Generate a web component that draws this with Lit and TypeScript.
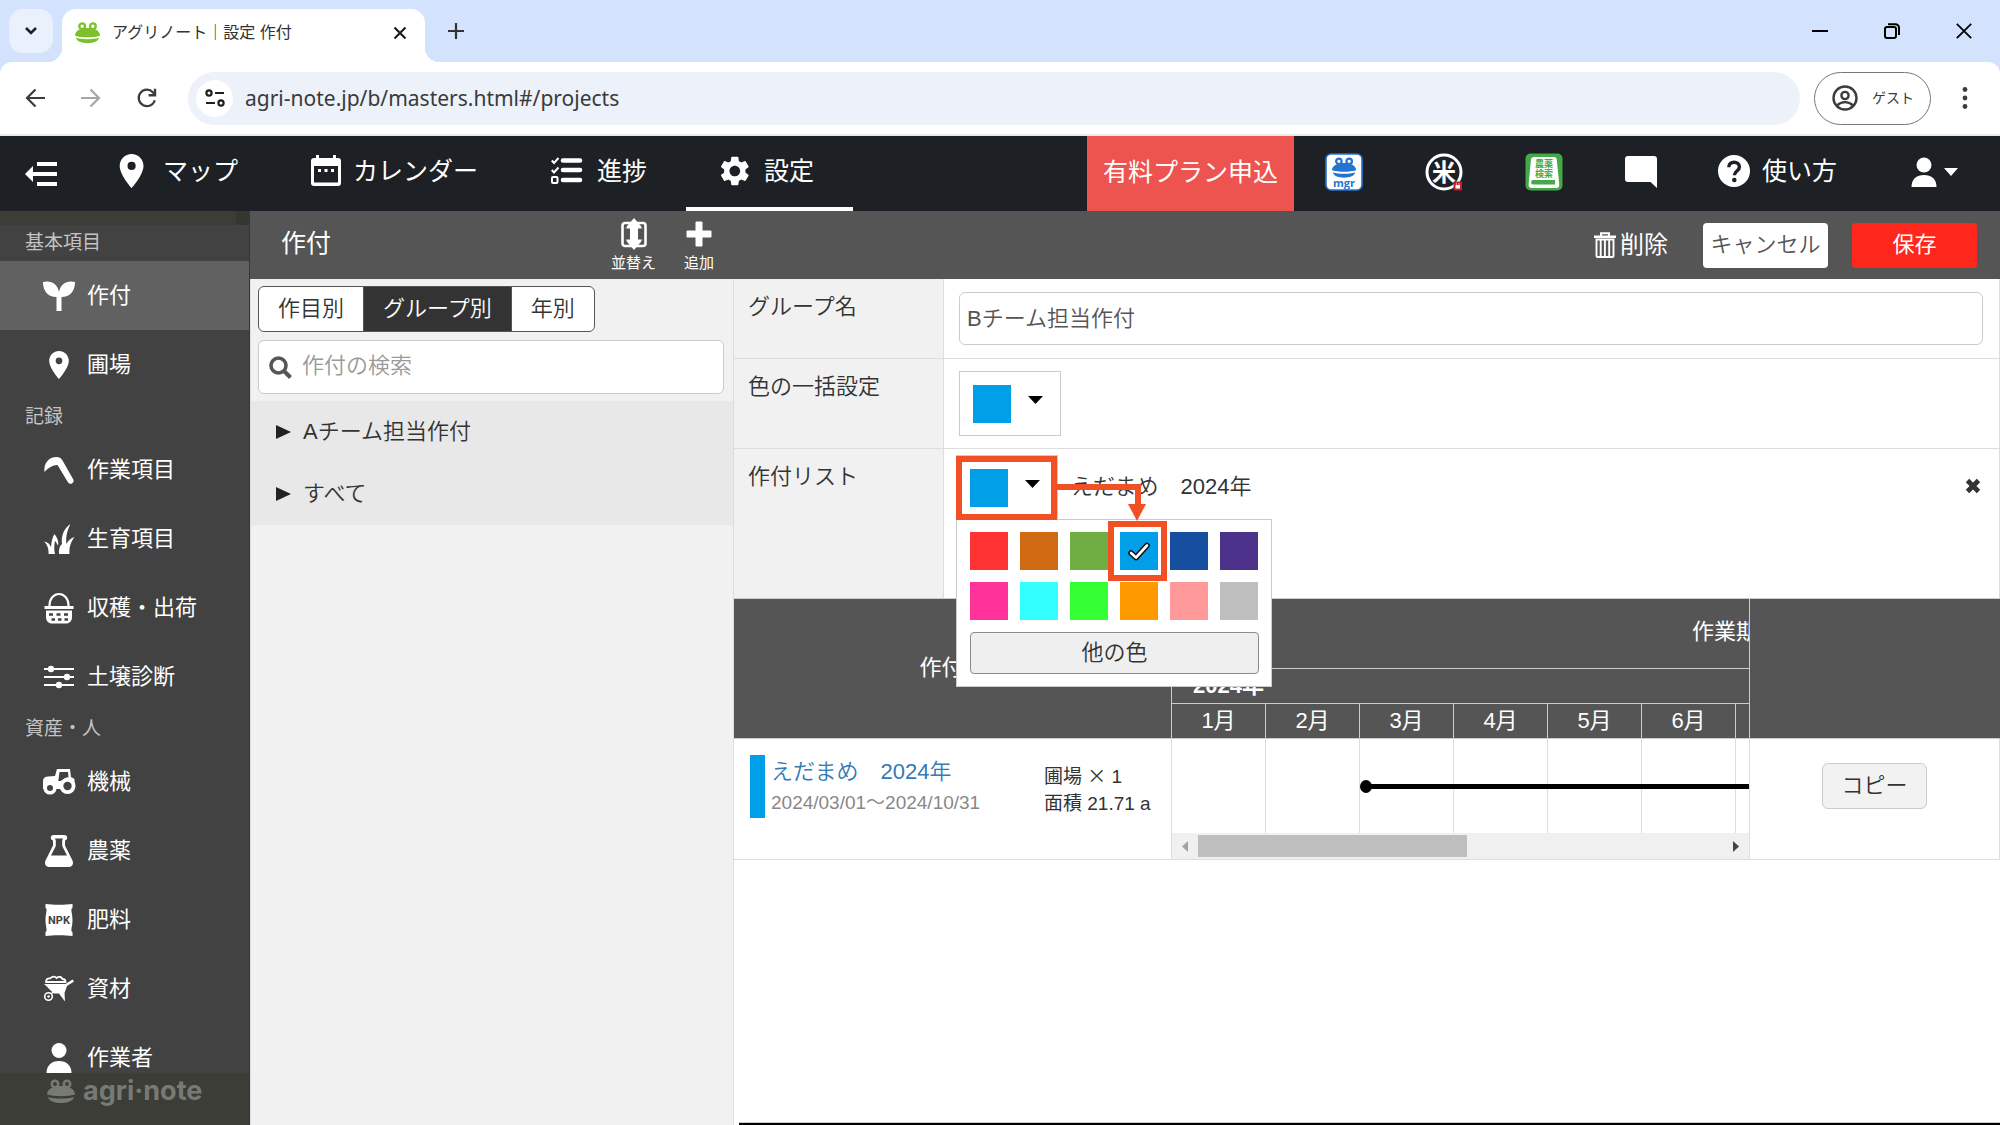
import { LitElement, html, svg, css, TemplateResult } from "lit";
import { customElement, property, state } from "lit/decorators.js";
import { classMap } from "lit/directives/class-map.js";
import { styleMap } from "lit/directives/style-map.js";

const frogShape = svg`
  <g fill="currentColor">
    <circle cx="8" cy="5" r="3.2" fill="none" stroke="currentColor" stroke-width="2.6"/>
    <circle cx="20" cy="5" r="3.2" fill="none" stroke="currentColor" stroke-width="2.6"/>
    <path d="M0 15.5C0 9.5 7 7 14 7s14 2.500 14 8.500c-4 1.200-9 1.700-14 1.700S4 16.700 0 15.500z"/>
    <path d="M1 18c4 1.100 8 1.600 13 1.600s9-.5 13-1.600c-1 4.300-7 6-13 6S2 22.300 1 18z"/>
  </g>`;

const pinPath =
  "M12 2C8.13 2 5 5.13 5 9c0 5.250 7 13 7 13s7-7.750 7-13c0-3.870-3.130-7-7-7zm0 9.400a2.400 2.400 0 1 1 0-4.800 2.400 2.400 0 0 1 0 4.800z";

const gearPath =
  "M19.14 12.94c.04-.3.06-.61.06-.94 0-.32-.02-.64-.07-.94l2.03-1.58c.18-.14.23-.41.12-.61l-1.92-3.32c-.12-.22-.37-.29-.59-.22l-2.39.96c-.5-.38-1.03-.7-1.62-.94l-.36-2.54c-.04-.24-.24-.41-.48-.41h-3.84c-.24 0-.43.17-.47.41l-.36 2.54c-.59.24-1.13.57-1.62.94l-2.39-.96c-.22-.08-.47 0-.59.22L2.74 8.87c-.12.21-.08.47.12.61l2.03 1.58c-.05.3-.09.63-.09.94s.02.64.07.94l-2.03 1.58c-.18.14-.23.41-.12.61l1.92 3.32c.12.22.37.29.59.22l2.39-.96c.5.38 1.03.7 1.62.94l.36 2.54c.05.24.24.41.48.41h3.84c.24 0 .44-.17.47-.41l.36-2.54c.59-.24 1.13-.56 1.62-.94l2.39.96c.22.08.47 0 .59-.22l1.92-3.32c.12-.22.07-.47-.12-.61l-2.01-1.58zM12 15.6c-1.98 0-3.6-1.620-3.600-3.600s1.620-3.600 3.600-3.600 3.600 1.620 3.600 3.600-1.620 3.600-3.600 3.600z";

interface Glyph {
  w: number;
  h: number;
  box?: string;
  body: TemplateResult;
}

const glyphs: Record<string, Glyph> = {
  chevron: { w: 14, h: 10, body: svg`<path d="M2 2l5 5 5-5" fill="none" stroke="#1f1f1f" stroke-width="2.6"/>` },
  frog: { w: 25, h: 23, box: "0 0 28 24", body: frogShape },
  frogLogo: { w: 28, h: 24, body: frogShape },
  close: { w: 14, h: 14, body: svg`<path d="M1.500 1.500l11 11M12.500 1.500l-11 11" fill="none" stroke="#1f1f1f" stroke-width="2.200"/>` },
  plusThin: { w: 16, h: 16, body: svg`<path d="M8 0v16M0 8h16" fill="none" stroke="#333" stroke-width="2.200"/>` },
  minimize: { w: 16, h: 16, body: svg`<path d="M0 8h16" stroke="#000" stroke-width="2"/>` },
  restore: {
    w: 16,
    h: 16,
    body: svg`<g fill="none" stroke="#000" stroke-width="2"><rect x="1" y="4" width="11" height="11" rx="2"/><path d="M4 1.200h7.500a3.500 3.500 0 0 1 3.500 3.500V12"/></g>`,
  },
  windowClose: { w: 16, h: 16, body: svg`<path d="M.8.8l14.400 14.400M15.200.8L.8 15.200" fill="none" stroke="#000" stroke-width="1.800"/>` },
  back: { w: 20, h: 20, body: svg`<path d="M20 10H2M10.500 1.500L2 10l8.500 8.500" fill="none" stroke="#3c3c3c" stroke-width="2.200"/>` },
  forward: { w: 20, h: 20, body: svg`<path d="M0 10h18M9.500 1.500L18 10l-8.500 8.500" fill="none" stroke="#a6a6a6" stroke-width="2.200"/>` },
  reload: {
    w: 20,
    h: 20,
    body: svg`<path d="M17.800 12.200A8.200 8.200 0 1 1 16 4.400l1.800 1.800" fill="none" stroke="#3c3c3c" stroke-width="2.200"/><path d="M19.200.8v7.600h-7.600V6h5.200V.8z" fill="#3c3c3c"/>`,
  },
  siteInfo: {
    w: 20,
    h: 18,
    body: svg`<g fill="none" stroke="#1f1f1f" stroke-width="2.200"><circle cx="4" cy="4" r="2.600"/><path d="M10 4h9M1 14h9"/><circle cx="16" cy="14" r="2.600"/></g>`,
  },
  account: {
    w: 26,
    h: 26,
    body: svg`<g fill="none" stroke="#3c3c3c" stroke-width="2.400"><circle cx="13" cy="13" r="11.500"/><circle cx="13" cy="10.500" r="3.600"/><path d="M5 20.500c4.500-4.500 11.500-4.500 16 0"/></g>`,
  },
  dots: { w: 6, h: 24, body: svg`<g fill="#3c3c3c"><circle cx="3" cy="3.500" r="2.400"/><circle cx="3" cy="12" r="2.400"/><circle cx="3" cy="20.500" r="2.400"/></g>` },
  collapse: { w: 32, h: 24, body: svg`<path d="M12 0h20v4H12zM7 10h25v4H7zM12 20h20v4H12zM0 12l8-8v16z" fill="#fff"/>` },
  pinNav: { w: 32, h: 34, box: "5 2 18 20", body: svg`<path d="${pinPath}" fill="#fff"/>` },
  calendar: {
    w: 30,
    h: 32,
    body: svg`<path d="M5 0h3v3h14V0h3v3h2a3 3 0 0 1 3 3v22a3 3 0 0 1-3 3H3a3 3 0 0 1-3-3V6a3 3 0 0 1 3-3h2zM3 11v16.500h24V11z" fill="#fff" fill-rule="evenodd"/><path d="M7 14h3v3H7zM13.500 14h3v3h-3zM20 14h3v3h-3z" fill="#fff"/>`,
  },
  checklist: {
    w: 34,
    h: 28,
    body: svg`<g fill="none" stroke="#fff"><path d="M12 3.500h17M12 13h17M12 23h17" stroke-width="4.600" stroke-linecap="round"/><path d="M.8 3.500L3 6l4.500-5M.8 13L3 15.500l4.500-5" stroke-width="2"/><rect x="1" y="20" width="5.500" height="6" rx="1" stroke-width="2"/></g>`,
  },
  gear: { w: 32, h: 32, box: "2 1.200 21.600 21.600", body: svg`<path d="${gearPath}" fill="#fff"/>` },
  mgr: {
    w: 38,
    h: 38,
    body: svg`<rect x="1" y="1" width="36" height="36" rx="5" fill="#fff" stroke="#2474d0" stroke-width="1.600"/>
      <g color="#2474d0" transform="translate(7 4) scale(.86)">${frogShape}</g>
      <text x="19" y="33.500" text-anchor="middle" font-family="Open Sans, sans-serif" font-weight="700" font-size="11" fill="#2474d0">mgr</text>`,
  },
  rice: {
    w: 38,
    h: 38,
    body: svg`<circle cx="19" cy="19" r="17" fill="none" stroke="#fff" stroke-width="3"/>
      <text x="19" y="28" text-anchor="middle" font-family="Noto Sans CJK JP, sans-serif" font-weight="700" font-size="24" fill="#fff">米</text>
      <rect x="28.500" y="28.500" width="8.500" height="9" rx="1" fill="#c5202b"/><path d="M30.500 32h4.500v3.500h-4.500zM31 30.500h1v1h-1zM33.500 30.500h1v1h-1z" fill="#fff"/>`,
  },
  pesticideBook: {
    w: 38,
    h: 38,
    body: svg`<rect x=".5" y=".5" width="37" height="37" rx="5" fill="#43aa47"/>
      <path d="M9 4h20c1.600 0 2.500.8 2.700 2.300l2.500 24.700v1c0 2-1 3-3 3H7c-2.500 0-3.600-1.500-3.400-3.500L6 6.500C6.200 5 7.200 4 9 4z" fill="#fff"/>
      <path d="M8 27h22v4.500H8c-2.500 0-2.500-4.500 0-4.500z" fill="#43aa47"/>
      <text x="19" y="14" text-anchor="middle" font-family="Liberation Sans, Noto Sans CJK JP, sans-serif" font-weight="700" font-size="9" fill="#43aa47">農薬</text>
      <text x="19" y="24" text-anchor="middle" font-family="Liberation Sans, Noto Sans CJK JP, sans-serif" font-weight="700" font-size="9" fill="#43aa47">検索</text>`,
  },
  chat: { w: 38, h: 32, body: svg`<path d="M2 0h26a3 3 0 0 1 3 3v29l-6.500-6H2a3 3 0 0 1-3-3V3a3 3 0 0 1 3-3z" transform="translate(1)" fill="#fff"/>` },
  help: {
    w: 32,
    h: 32,
    body: svg`<circle cx="16" cy="16" r="16" fill="#fff"/><path d="M10.800 12.200c0-6.800 10.600-6.400 10.600-.3 0 4-5 4.300-5 8.400" fill="none" stroke="#1d2024" stroke-width="3.400"/><circle cx="16.300" cy="25" r="2.300" fill="#1d2024"/>`,
  },
  userNav: { w: 26, h: 30, body: svg`<circle cx="13" cy="8" r="7.500" fill="#fff"/><path d="M.5 30c0-8 5-12 12.500-12s12.500 4 12.500 12z" fill="#fff"/>` },
  caretNav: { w: 14, h: 8, body: svg`<path d="M0 0h14L7 8z" fill="#fff"/>` },
  caret: { w: 15, h: 8, body: svg`<path d="M0 0h15L7.500 8z" fill="#000"/>` },
  reorder: {
    w: 26,
    h: 30,
    body: svg`<rect x="1.500" y="4" width="23" height="23" rx="2.500" fill="none" stroke="#fff" stroke-width="2.600"/><path d="M13-1l9 10.500h-5v11h5L13 31 4 20.500h5v-11H4z" fill="#fff"/><path d="M5 7v17M21 7v17" stroke="#555" stroke-width="1"/>`,
  },
  plusBold: { w: 26, h: 26, body: svg`<path d="M10.500.5h5a1 1 0 0 1 1 1v8h8a1 1 0 0 1 1 1v5a1 1 0 0 1-1 1h-8v8a1 1 0 0 1-1 1h-5a1 1 0 0 1-1-1v-8h-8a1 1 0 0 1-1-1v-5a1 1 0 0 1 1-1h8v-8a1 1 0 0 1 1-1z" fill="#fff"/>` },
  trash: {
    w: 22,
    h: 26,
    body: svg`<path d="M0 3.500h22v2.500H0z" fill="#fff"/><path d="M7 4V1.200h8V4" fill="none" stroke="#fff" stroke-width="2"/><path d="M2.500 7.500h17V24a1 1 0 0 1-1 1h-15a1 1 0 0 1-1-1zM6.700 8v16M10.900 8v16M15.200 8v16" fill="none" stroke="#fff" stroke-width="1.900"/>`,
  },
  search: { w: 23, h: 23, body: svg`<circle cx="9.500" cy="9.500" r="7.500" fill="none" stroke="#555" stroke-width="3.600"/><path d="M15 15l6.500 6.500" stroke="#555" stroke-width="4"/>` },
  triangle: { w: 15, h: 14, body: svg`<path d="M0 0l15 7-15 7z" fill="#222"/>` },
  remove: { w: 16, h: 16, body: svg`<path d="M2.500 2.500l11 11M13.500 2.500l-11 11" stroke="#333" stroke-width="4.800"/>` },
  check: {
    w: 22,
    h: 18,
    body: svg`<path d="M3 11l5 4.500L19 3.500" fill="none" stroke="#111" stroke-width="5.600" stroke-linecap="round" stroke-linejoin="round"/><path d="M3 11l5 4.500L19 3.500" fill="none" stroke="#fff" stroke-width="2.600" stroke-linecap="round" stroke-linejoin="round"/>`,
  },
  sprout: { w: 32, h: 30, body: svg`<path d="M0 1C8-1 14.500 3 16 11 17.500 3 24-1 32 1c0 9-5 15-13.500 15V30h-5V16C5 16 0 10 0 1z" fill="#fff"/>` },
  pin: { w: 32, h: 28, box: "1 2 22 20", body: svg`<path d="${pinPath}" fill="#fff"/>` },
  sickle: { w: 32, h: 28, body: svg`<path d="M1.500 16C.5 7 6 1 13.500 1c3 0 5 1.500 6.300 4l10.500 18.500c1.400 3.500-3 6-5.200 3L14.500 9C10 8.800 5.500 11.500 1.500 16z" fill="#fff"/>` },
  grass: {
    w: 32,
    h: 32,
    body: svg`<path d="M5.500 31C6 26 4 21 1 18.500c4 .5 6 3 7 5.500.5-6 1.500-10 3.500-13C14.500 15 16 19 15 23c-1-2.500-2-4-3-5-1 5-1 9 0 13zM16 31c-.5-4 .5-8 3-10C18 13 21 5 27.500 1 24 8 22.500 14 23.500 21c2-4 4.500-6 8-7C27.500 19 26 25 26.500 31z" fill="#fff"/>`,
  },
  basket: {
    w: 32,
    h: 32,
    body: svg`<path d="M6.500 14C6.500-2 25.500-2 25.500 14" fill="none" stroke="#fff" stroke-width="2.200"/><path d="M1.500 14h29v3h-29z" fill="#fff"/><path d="M3 18.500h26V25c0 4-2.500 6.500-6 6.500H9C5.500 31.500 3 29 3 25z" fill="#fff"/>
      <path d="M6 22.500h4M13.500 22.500h4M21 22.500h4M8.500 27.500h3.500M15 27.500h3.500M21.500 27.500h3.500" stroke="#424242" stroke-width="2.400"/>`,
  },
  sliders: {
    w: 32,
    h: 24,
    body: svg`<path d="M1 4h30M1 12h30M1 20h30" stroke="#fff" stroke-width="2.200"/><g fill="#fff"><circle cx="8" cy="4" r="3.200"/><circle cx="24" cy="12" r="3.200"/><circle cx="16" cy="20" r="3.200"/></g>`,
  },
  tractor: {
    w: 32,
    h: 26,
    body: svg`<path d="M14 0h13l1 8 3.500 2v5H0v-3c0-3 2-4.500 5-4.500l7-.5z" fill="#fff"/><path d="M16.500 3H25l.5 5a10 10 0 0 0-7.500 6h-3z" fill="#424242"/><path d="M0 12h18v8H0z" fill="#fff"/>
      <circle cx="7" cy="19" r="6.600" fill="#fff"/><circle cx="7" cy="19" r="3" fill="#424242"/><circle cx="24.500" cy="17" r="8" fill="#fff"/><circle cx="24.500" cy="17" r="4.200" fill="#424242"/>`,
  },
  flask: {
    w: 32,
    h: 32,
    body: svg`<path d="M10.500 0h11C25 0 25 5 22 5.500v5l7.500 15c1.500 4-.5 6.500-4 6.500h-19c-3.500 0-5.500-2.500-4-6.500l7.500-15v-5C7 5 7 0 10.500 0zM12 3.500l.8 2V11L8 20.500h16L19.200 11V5.500l.8-2z" fill="#fff" fill-rule="evenodd"/>`,
  },
  npk: {
    w: 32,
    h: 32,
    body: svg`<path d="M2.500 0C10 1 22 1 29.500 0v4c-2.500 1 0 5 0 12s-2.500 11 0 12v4C22 31 10 31 2.500 32v-4c2.500-1 0-5 0-12s2.500-11 0-12z" fill="#fff"/>
      <text x="16" y="20" text-anchor="middle" font-family="Roboto, sans-serif" font-weight="700" font-size="11" fill="#424242">NPK</text>`,
  },
  barrow: {
    w: 32,
    h: 26,
    body: svg`<path d="M1 8h21.500l7-4.500 1.500 2L24 10l-2.500 7 .5 8.500-6-8H11C8 15 5 11.500 1 8z" fill="#fff"/><path d="M3 6C3 3 5 2 7 2.500 9 0 12 0 13.500 2 16 0 19 1 19.500 3c2 0 3 1 3 3z" fill="none" stroke="#fff" stroke-width="1.800"/>
      <circle cx="5.500" cy="20.500" r="3.800" fill="none" stroke="#fff" stroke-width="1.600"/><circle cx="5.500" cy="20.500" r="1.200" fill="#fff"/><path d="M9 17l3-2" stroke="#fff" stroke-width="2"/>`,
  },
  person: { w: 32, h: 30, body: svg`<circle cx="16" cy="7.500" r="7.500" fill="#fff"/><path d="M3.500 30c0-7.500 5-12 12.500-12s12.500 4.500 12.500 12z" fill="#fff"/>` },
  connector: {
    w: 90,
    h: 38,
    body: svg`<path d="M0 4h81v18" fill="none" stroke="#f15025" stroke-width="6"/><path d="M71 21h18l-9 17z" fill="#f15025"/>`,
  },
};

function icon(name: string) {
  const g = glyphs[name];
  return html`<svg class="glyph" aria-hidden="true" width=${g.w} height=${g.h} viewBox=${g.box ?? `0 0 ${g.w} ${g.h}`}>${g.body}</svg>`;
}

const base = css`
  :host {
    display: block;
    box-sizing: border-box;
    font-family: "Liberation Sans", "Noto Sans CJK JP", sans-serif;
    font-size: 22px;
    font-weight: 350;
    line-height: 30px;
    color: #333;
  }
  *,
  *::before,
  *::after {
    box-sizing: border-box;
  }
  button,
  input {
    font: inherit;
    color: inherit;
    margin: 0;
    padding: 0;
    border: 0;
    background: none;
    outline: none;
  }
  a {
    color: inherit;
    text-decoration: none;
  }
  .glyph {
    display: block;
    flex: none;
    overflow: visible;
  }
`;

@customElement("browser-bar")
export class BrowserBar extends LitElement {
  static styles = [
    base,
    css`
      .tabs {
        display: flex;
        align-items: flex-end;
        height: 62px;
        padding-left: 9px;
        background: #d3e2fd;
      }
      .chooser {
        display: flex;
        align-items: center;
        justify-content: center;
        width: 44px;
        height: 44px;
        margin: 0 9px 9px 0;
        border-radius: 14px;
        background: #eaf1fd;
      }
      .tab {
        position: relative;
        display: flex;
        align-items: center;
        width: 363px;
        height: 53px;
        padding: 0 18px 6px 13px;
        border-radius: 14px 14px 0 0;
        background: #fff;
        font-size: 16px;
      }
      .tab::before,
      .tab::after {
        content: "";
        position: absolute;
        bottom: 0;
        width: 14px;
        height: 14px;
      }
      .tab::before {
        right: 100%;
        background: radial-gradient(circle at 0 0, transparent 14px, #fff 14px);
      }
      .tab::after {
        left: 100%;
        background: radial-gradient(circle at 100% 0, transparent 14px, #fff 14px);
      }
      .frog {
        color: #7cc02c;
      }
      .title {
        flex: 1;
        padding-left: 12px;
        font-weight: 400;
        white-space: nowrap;
      }
      .add {
        margin: 0 0 23px 23px;
      }
      .window {
        display: flex;
        gap: 56px;
        margin: 0 28px 23px auto;
      }
      .under {
        background: #d3e2fd;
      }
      .toolbar {
        display: flex;
        align-items: center;
        height: 74px;
        padding: 0 32px 0 25px;
        border-bottom: 2px solid #e8eaeb;
        border-radius: 12px 12px 0 0;
        background: #fff;
      }
      .history {
        display: flex;
        gap: 36px;
      }
      .address {
        display: flex;
        flex: 1;
        align-items: center;
        height: 53px;
        margin: 0 14px 0 31px;
        padding: 0 8px;
        border-radius: 27px;
        background: #ecf1fa;
      }
      .site {
        display: flex;
        align-items: center;
        justify-content: center;
        width: 37px;
        height: 37px;
        border-radius: 50%;
        background: #fff;
      }
      .url {
        flex: 1;
        min-width: 0;
        padding-left: 12px;
        font-family: "Noto Sans", sans-serif;
        font-size: 21px;
        font-weight: 400;
        color: #3a3a3a;
      }
      .guest {
        display: flex;
        align-items: center;
        gap: 14px;
        width: 117px;
        height: 53px;
        margin-right: 31px;
        padding-left: 17px;
        border: 1px solid #777;
        border-radius: 27px;
        font-size: 14px;
        font-weight: 400;
        color: #3a3a3a;
      }
    `,
  ];

  render() {
    return html`
      <div class="tabs">
        <button class="chooser" aria-label="タブを検索">${icon("chevron")}</button>
        <div class="tab">
          <span class="frog">${icon("frog")}</span>
          <span class="title">アグリノート｜設定 作付</span>
          <button aria-label="閉じる">${icon("close")}</button>
        </div>
        <button class="add" aria-label="新しいタブ">${icon("plusThin")}</button>
        <div class="window">
          <button aria-label="最小化">${icon("minimize")}</button>
          <button aria-label="元に戻す">${icon("restore")}</button>
          <button aria-label="ウィンドウを閉じる">${icon("windowClose")}</button>
        </div>
      </div>
      <div class="under">
        <div class="toolbar">
          <div class="history">
            <button aria-label="戻る">${icon("back")}</button>
            <button aria-label="進む">${icon("forward")}</button>
            <button aria-label="再読み込み">${icon("reload")}</button>
          </div>
          <div class="address">
            <button class="site" aria-label="サイト情報">${icon("siteInfo")}</button>
            <input class="url" type="text" aria-label="アドレス" .value=${"agri-note.jp/b/masters.html#/projects"} />
          </div>
          <button class="guest">${icon("account")}<span>ゲスト</span></button>
          <button aria-label="メニュー">${icon("dots")}</button>
        </div>
      </div>
    `;
  }
}

@customElement("main-nav")
export class MainNav extends LitElement {
  static styles = [
    base,
    css`
      :host {
        height: 75px;
        background: #1d2024;
        color: #fff;
        font-size: 25px;
        font-weight: 400;
      }
      .nav {
        display: flex;
        height: 100%;
        padding: 0 42px 0 25px;
        white-space: nowrap;
      }
      .collapse {
        margin-right: 28px;
      }
      .tab {
        display: flex;
        align-items: center;
        gap: 12px;
        padding: 0 39px 2px 34px;
        border-bottom: 4px solid transparent;
      }
      .tab.current {
        border-bottom-color: #fff;
      }
      .plan {
        display: flex;
        align-items: center;
        justify-content: center;
        width: 207px;
        margin-left: auto;
        padding-bottom: 4px;
        background: #ee544f;
      }
      .app,
      .guide,
      .user {
        display: flex;
        align-items: center;
        padding-bottom: 4px;
      }
      .app {
        width: 100px;
        justify-content: center;
      }
      .guide {
        gap: 12px;
        padding-bottom: 5px;
        padding-left: 24px;
      }
      .user {
        gap: 7px;
        margin-left: 74px;
      }
    `,
  ];

  private tabs = [
    { icon: "pinNav", label: "マップ", href: "#/map" },
    { icon: "calendar", label: "カレンダー", href: "#/calendar" },
    { icon: "checklist", label: "進捗", href: "#/progress" },
    { icon: "gear", label: "設定", href: "#/projects", current: true },
  ];

  private apps = [
    { icon: "mgr", label: "アグリノートマネージャー" },
    { icon: "rice", label: "アグリノート米市場" },
    { icon: "pesticideBook", label: "農薬検索" },
    { icon: "chat", label: "メッセージ" },
  ];

  render() {
    return html`
      <nav class="nav">
        <button class="collapse" aria-label="メニューを閉じる">${icon("collapse")}</button>
        ${this.tabs.map(
          (t) => html`<a class=${classMap({ tab: true, current: !!t.current })} href=${t.href}>${icon(t.icon)}<span>${t.label}</span></a>`
        )}
        <a class="plan" href="#/plan">有料プラン申込</a>
        ${this.apps.map((a) => html`<a class="app" href="#" aria-label=${a.label}>${icon(a.icon)}</a>`)}
        <a class="guide" href="#/guide">${icon("help")}<span>使い方</span></a>
        <button class="user" aria-label="アカウント">${icon("userNav")}${icon("caretNav")}</button>
      </nav>
    `;
  }
}

@customElement("side-menu")
export class SideMenu extends LitElement {
  static styles = [
    base,
    css`
      :host {
        display: flex;
        flex-direction: column;
        min-height: 0;
        border-right: 1px solid #383838;
        background: #424242;
        color: #fff;
        font-weight: 400;
      }
      .strip {
        flex: none;
        height: 14px;
        border-right: 13px solid #33372f;
        background: #3b3d36;
      }
      .list {
        flex: 1;
        min-height: 0;
        overflow: hidden;
      }
      .heading {
        height: 36px;
        margin: 0;
        padding-left: 25px;
        font-size: 19px;
        font-weight: 400;
        line-height: 35px;
        color: #c4c4c4;
      }
      .item {
        display: flex;
        align-items: center;
        gap: 12px;
        height: 69px;
        padding-left: 43px;
      }
      .item.current {
        background: #616161;
      }
      .brand {
        display: flex;
        flex: none;
        gap: 8px;
        height: 52px;
        padding: 6px 0 0 47px;
        background: #3b3d36;
        font-family: Inter, sans-serif;
        font-size: 27px;
        font-weight: 700;
        line-height: 24px;
        color: #777a74;
      }
    `,
  ];

  private sections = [
    { title: "基本項目", items: [["sprout", "作付"], ["pin", "圃場"]] },
    { title: "記録", items: [["sickle", "作業項目"], ["grass", "生育項目"], ["basket", "収穫・出荷"], ["sliders", "土壌診断"]] },
    { title: "資産・人", items: [["tractor", "機械"], ["flask", "農薬"], ["npk", "肥料"], ["barrow", "資材"], ["person", "作業者"]] },
  ];

  render() {
    return html`
      <div class="strip"></div>
      <nav class="list">
        ${this.sections.map(
          (s) => html`
            <h2 class="heading">${s.title}</h2>
            ${s.items.map(
              ([glyph, label]) =>
                html`<a class=${classMap({ item: true, current: label === "作付" })} href="#/${glyph}">${icon(glyph)}<span>${label}</span></a>`
            )}
          `
        )}
      </nav>
      <div class="brand">${icon("frogLogo")}<span>agri·note</span></div>
    `;
  }
}

@customElement("group-list")
export class GroupList extends LitElement {
  @state() private mode = "グループ別";

  static styles = [
    base,
    css`
      :host {
        border: 1px solid #ddd;
        border-width: 0 1px;
        background: #f1f1f1;
      }
      .modes {
        display: inline-flex;
        height: 46px;
        margin: 7px 0 0 7px;
        overflow: hidden;
        vertical-align: top;
        border: 1px solid #555;
        border-radius: 6px;
        background: #fff;
      }
      .mode {
        padding: 0 19px;
      }
      .mode + .mode {
        border-left: 1px solid #555;
      }
      .mode.current {
        background: #333;
        color: #fff;
      }
      .search {
        display: flex;
        align-items: center;
        gap: 10px;
        height: 54px;
        margin: 8px 9px 7px 7px;
        padding: 0 10px;
        border: 1px solid #ccc;
        border-radius: 6px;
        background: #fff;
      }
      .query {
        flex: 1;
        min-width: 0;
        padding-bottom: 2px;
      }
      .query::placeholder {
        color: #999;
        opacity: 1;
      }
      .groups {
        margin: 0;
        padding: 0;
        list-style: none;
        background: #e8e8e8;
      }
      .group {
        display: flex;
        align-items: center;
        gap: 12px;
        width: 100%;
        height: 62px;
        padding-left: 25px;
      }
    `,
  ];

  render() {
    return html`
      <div class="modes">
        ${["作目別", "グループ別", "年別"].map(
          (m) => html`<button class=${classMap({ mode: true, current: m === this.mode })} @click=${() => (this.mode = m)}>${m}</button>`
        )}
      </div>
      <label class="search">${icon("search")}<input class="query" type="search" aria-label="作付の検索" placeholder="作付の検索" /></label>
      <ul class="groups">
        ${["Aチーム担当作付", "すべて"].map((g) => html`<li><button class="group">${icon("triangle")}<span>${g}</span></button></li>`)}
      </ul>
    `;
  }
}

@customElement("color-picker")
export class ColorPicker extends LitElement {
  @property() color = "#019fe8";
  @property({ type: Boolean }) open = false;
  @property({ type: Boolean }) marked = false;

  static palette = [
    "#ff3333", "#d06b14", "#70ad42", "#019fe8", "#164f9f", "#4d328b",
    "#ff3399", "#33ffff", "#33ff33", "#ff9900", "#ff9999", "#bfbfbf",
  ];

  static styles = [
    base,
    css`
      :host {
        position: relative;
        width: 102px;
      }
      .trigger {
        display: flex;
        align-items: center;
        gap: 17px;
        width: 102px;
        height: 65px;
        padding-left: 13px;
        border: 1px solid #ccc;
        background: #fff;
      }
      .trigger .glyph {
        margin-bottom: 8px;
      }
      .swatch {
        display: flex;
        align-items: center;
        justify-content: center;
        width: 38px;
        height: 38px;
      }
      .popup {
        position: absolute;
        top: 64px;
        left: 0;
        z-index: 2;
        width: 316px;
        padding: 12px;
        padding-left: 13px;
        border: 1px solid #ccc;
        background: #fff;
      }
      .swatches {
        display: grid;
        grid-template-columns: repeat(6, 38px);
        gap: 12px;
      }
      .other {
        width: 100%;
        height: 42px;
        margin-top: 12px;
        border: 1px solid #8b8b8b;
        border-radius: 4px;
        background: #efefef;
      }
      .frame {
        position: absolute;
        z-index: 3;
        border: 6px solid #f15025;
        pointer-events: none;
      }
      .frame.from {
        inset: 1px 1px 0 0;
      }
      .frame.to {
        top: 66px;
        left: 152px;
        width: 59px;
        height: 60px;
      }
      .arrow {
        position: absolute;
        top: 28px;
        left: 101px;
        z-index: 4;
        pointer-events: none;
      }
    `,
  ];

  render() {
    return html`
      <button class="trigger" aria-label="色を選択" @click=${() => (this.open = !this.open)}>
        <span class="swatch" style=${styleMap({ background: this.color })}></span>${icon("caret")}
      </button>
      ${this.open
        ? html`<div class="popup">
            <div class="swatches">
              ${ColorPicker.palette.map(
                (c) => html`<button class="swatch" aria-label=${c} style=${styleMap({ background: c })} @click=${() => (this.color = c)}>
                  ${c === this.color ? icon("check") : null}
                </button>`
              )}
            </div>
            <button class="other">他の色</button>
          </div>`
        : null}
      ${this.marked
        ? html`<div class="frame from"></div>
            <div class="frame to"></div>
            <div class="arrow">${icon("connector")}</div>`
        : null}
    `;
  }
}

@customElement("project-table")
export class ProjectTable extends LitElement {
  static monthWidth = 94;
  static monthsInView = 6;

  static styles = [
    base,
    css`
      .table {
        width: 100%;
        table-layout: fixed;
        border-collapse: separate;
        border-spacing: 0;
        border-top: 1px solid #ccc;
      }
      .name-col {
        width: 437px;
      }
      .action-col {
        width: 250px;
      }
      th,
      td {
        padding: 0;
        text-align: left;
        vertical-align: top;
        font-weight: 350;
      }
      th {
        border-bottom: 1px solid #ccc;
        background: #555;
        color: #fff;
        font-weight: 400;
      }
      td {
        border-bottom: 1px solid #ddd;
      }
      .name-head {
        padding-bottom: 2px;
        vertical-align: middle;
        text-align: center;
      }
      .middle {
        border-left: 1px solid #ccc;
        border-right: 1px solid #ccc;
      }
      td.middle {
        border-color: #ddd;
      }
      .clip {
        overflow: hidden;
      }
      .period {
        height: 70px;
        border-bottom: 1px solid #ccc;
        line-height: 66px;
        text-align: center;
      }
      .year {
        height: 35px;
        padding-left: 21px;
        border-bottom: 1px solid #ccc;
        font-weight: 700;
        line-height: 33px;
      }
      .months {
        display: flex;
      }
      .month {
        flex: 1;
        height: 34px;
        border-right: 1px solid #ccc;
        line-height: 33px;
        text-align: center;
      }
      .cells {
        position: relative;
        display: flex;
        height: 94px;
      }
      .cell {
        flex: 1;
        border-right: 1px solid #ddd;
      }
      .span {
        position: absolute;
        top: 45px;
        height: 5px;
        background: #000;
      }
      .span::before {
        content: "";
        position: absolute;
        top: -4px;
        left: -6px;
        width: 12px;
        height: 13px;
        border-radius: 50%;
        background: #000;
      }
      .scroll {
        display: flex;
        align-items: center;
        height: 26px;
        padding: 1px 0;
        background: #f0f0f0;
      }
      .step {
        display: flex;
        align-items: center;
        justify-content: center;
        width: 26px;
        height: 24px;
      }
      .track {
        flex: 1;
        height: 22px;
      }
      .thumb {
        height: 22px;
        background: #bfbfbf;
      }
      .project {
        display: flex;
        padding: 16px 20px 0 16px;
      }
      .bar {
        width: 15px;
        height: 63px;
        margin-right: 6px;
        background: #019fe8;
      }
      .names {
        display: flex;
        flex-direction: column;
        flex: 1;
        padding-top: 2px;
      }
      .link {
        height: 32px;
        color: #337ab7;
      }
      .dates {
        font-size: 19px;
        line-height: 27px;
        color: #888;
      }
      .facts {
        width: 107px;
        padding-top: 6px;
        font-size: 19px;
        font-weight: 400;
        line-height: 27px;
        white-space: nowrap;
      }
      .times {
        font-family: "Noto Sans CJK JP", sans-serif;
      }
      .copy-cell {
        padding: 24px 0 0 72px;
        border-right: 1px solid #ddd;
      }
      .copy {
        width: 105px;
        height: 46px;
        border: 1px solid #ccc;
        border-radius: 6px;
        background: #f2f2f2;
      }
    `,
  ];

  render() {
    const w = ProjectTable.monthWidth;
    const months = Array.from({ length: 12 }, (_, i) => i + 1);
    const full = styleMap({ width: `${w * 12}px` });
    return html`
      <table class="table">
        <colgroup>
          <col class="name-col" />
          <col />
          <col class="action-col" />
        </colgroup>
        <thead>
          <tr>
            <th class="name-head">作付名</th>
            <th class="middle">
              <div class="clip">
                <div style=${full}>
                  <div class="period">作業期間</div>
                  <div class="year">2024年</div>
                  <div class="months">
                    ${months.map((m) => html`<div class="month">${m <= ProjectTable.monthsInView ? `${m}月` : null}</div>`)}
                  </div>
                </div>
              </div>
            </th>
            <th></th>
          </tr>
        </thead>
        <tbody>
          <tr>
            <td>
              <div class="project">
                <div class="bar"></div>
                <div class="names">
                  <a class="link" href="#/projects/1">えだまめ　2024年</a>
                  <span class="dates">2024/03/01～2024/10/31</span>
                </div>
                <div class="facts">
                  <div>圃場 <span class="times">×</span> 1</div>
                  <div>面積 21.71 a</div>
                </div>
              </div>
            </td>
            <td class="middle">
              <div class="clip">
                <div class="cells" style=${full}>
                  ${months.map(() => html`<div class="cell"></div>`)}
                  <div class="span" style=${styleMap({ left: `${w * 2 + 6}px`, width: `${w * 8 - 6}px` })}></div>
                </div>
              </div>
              <div class="scroll">
                <button class="step" aria-label="左へ">
                  <svg width="6" height="11" viewBox="0 0 6 11"><path d="M6 0v11L0 5.500z" fill="#a3a3a3" /></svg>
                </button>
                <div class="track"><div class="thumb" style=${styleMap({ width: `${(578 / (w * 12)) * 100}%` })}></div></div>
                <button class="step" aria-label="右へ">
                  <svg width="6" height="11" viewBox="0 0 6 11"><path d="M0 0v11l6-5.500z" fill="#444" /></svg>
                </button>
              </div>
            </td>
            <td class="copy-cell"><button class="copy">コピー</button></td>
          </tr>
        </tbody>
      </table>
    `;
  }
}

@customElement("group-form")
export class GroupForm extends LitElement {
  static styles = [
    base,
    css`
      :host {
        display: flex;
        flex-direction: column;
        min-width: 0;
        background: #fff;
      }
      .row {
        display: flex;
        border-bottom: 1px solid #ddd;
      }
      .row.list {
        min-height: 149px;
        border-bottom: 0;
      }
      .label {
        width: 210px;
        padding: 13px 14px 0;
        border-right: 1px solid #ddd;
        background: #f1f1f1;
      }
      .field {
        display: flex;
        flex: 1;
        align-items: flex-start;
        min-width: 0;
        padding: 12px 16px 12px 15px;
        border-right: 1px solid #ddd;
      }
      .row.name .field {
        padding-top: 13px;
        padding-bottom: 13px;
      }
      .row.list .field {
        padding: 6px 18px 0 12px;
      }
      .name-input {
        width: 100%;
        height: 53px;
        padding: 0 7px 6px;
        border: 1px solid #ccc;
        border-radius: 6px;
        color: #555;
      }
      .crop {
        flex: 1;
        padding: 17px 0 0 13px;
      }
      .remove {
        margin-top: 23px;
      }
      .footer {
        height: 3px;
        margin: auto 0 0 5px;
        border-top: 1px solid #ccc;
        background: #000;
      }
    `,
  ];

  render() {
    return html`
      <div class="row name">
        <label class="label" for="group-name">グループ名</label>
        <div class="field"><input id="group-name" class="name-input" type="text" .value=${"Bチーム担当作付"} /></div>
      </div>
      <div class="row">
        <div class="label">色の一括設定</div>
        <div class="field"><color-picker></color-picker></div>
      </div>
      <div class="row list">
        <div class="label">作付リスト</div>
        <div class="field">
          <color-picker open marked></color-picker>
          <span class="crop">えだまめ　2024年</span>
          <button class="remove" aria-label="削除">${icon("remove")}</button>
        </div>
      </div>
      <project-table></project-table>
      <div class="footer"></div>
    `;
  }
}

@customElement("app-root")
export class AppRoot extends LitElement {
  static styles = [
    base,
    css`
      :host {
        display: flex;
        flex-direction: column;
        height: 100vh;
        overflow: hidden;
        background: #fff;
      }
      .body {
        display: grid;
        flex: 1;
        grid-template-columns: 250px minmax(0, 1fr);
        min-height: 0;
      }
      .content {
        display: flex;
        flex-direction: column;
        min-width: 0;
      }
      .bar {
        display: flex;
        align-items: center;
        flex: none;
        height: 68px;
        padding-right: 23px;
        background: #555;
        color: #fff;
      }
      .heading {
        width: 361px;
        margin: 0;
        padding: 0 0 4px 31px;
        font-size: 25px;
        font-weight: 400;
      }
      .tools {
        display: flex;
        gap: 28px;
        margin-right: auto;
      }
      .tool {
        display: flex;
        flex-direction: column;
        align-items: center;
        justify-content: space-between;
        height: 54px;
        font-size: 15px;
        font-weight: 400;
        line-height: 18px;
      }
      .tool-icon {
        display: flex;
        align-items: center;
        height: 32px;
      }
      .delete {
        display: flex;
        align-items: center;
        gap: 4px;
        margin-right: 35px;
        font-size: 24px;
        font-weight: 400;
      }
      .cancel,
      .save {
        width: 125px;
        height: 45px;
        border-radius: 4px;
      }
      .cancel {
        margin-right: 24px;
        background: #fff;
        color: #555;
      }
      .save {
        background: #ff261c;
        font-weight: 400;
      }
      .panels {
        display: grid;
        flex: 1;
        grid-template-columns: 484px minmax(0, 1fr);
        min-height: 0;
      }
    `,
  ];

  render() {
    return html`
      <browser-bar></browser-bar>
      <main-nav></main-nav>
      <div class="body">
        <side-menu></side-menu>
        <main class="content">
          <header class="bar">
            <h1 class="heading">作付</h1>
            <div class="tools">
              <button class="tool"><span class="tool-icon">${icon("reorder")}</span>並替え</button>
              <button class="tool"><span class="tool-icon">${icon("plusBold")}</span>追加</button>
            </div>
            <button class="delete">${icon("trash")}<span>削除</span></button>
            <button class="cancel">キャンセル</button>
            <button class="save">保存</button>
          </header>
          <div class="panels">
            <group-list></group-list>
            <group-form></group-form>
          </div>
        </main>
      </div>
    `;
  }
}
